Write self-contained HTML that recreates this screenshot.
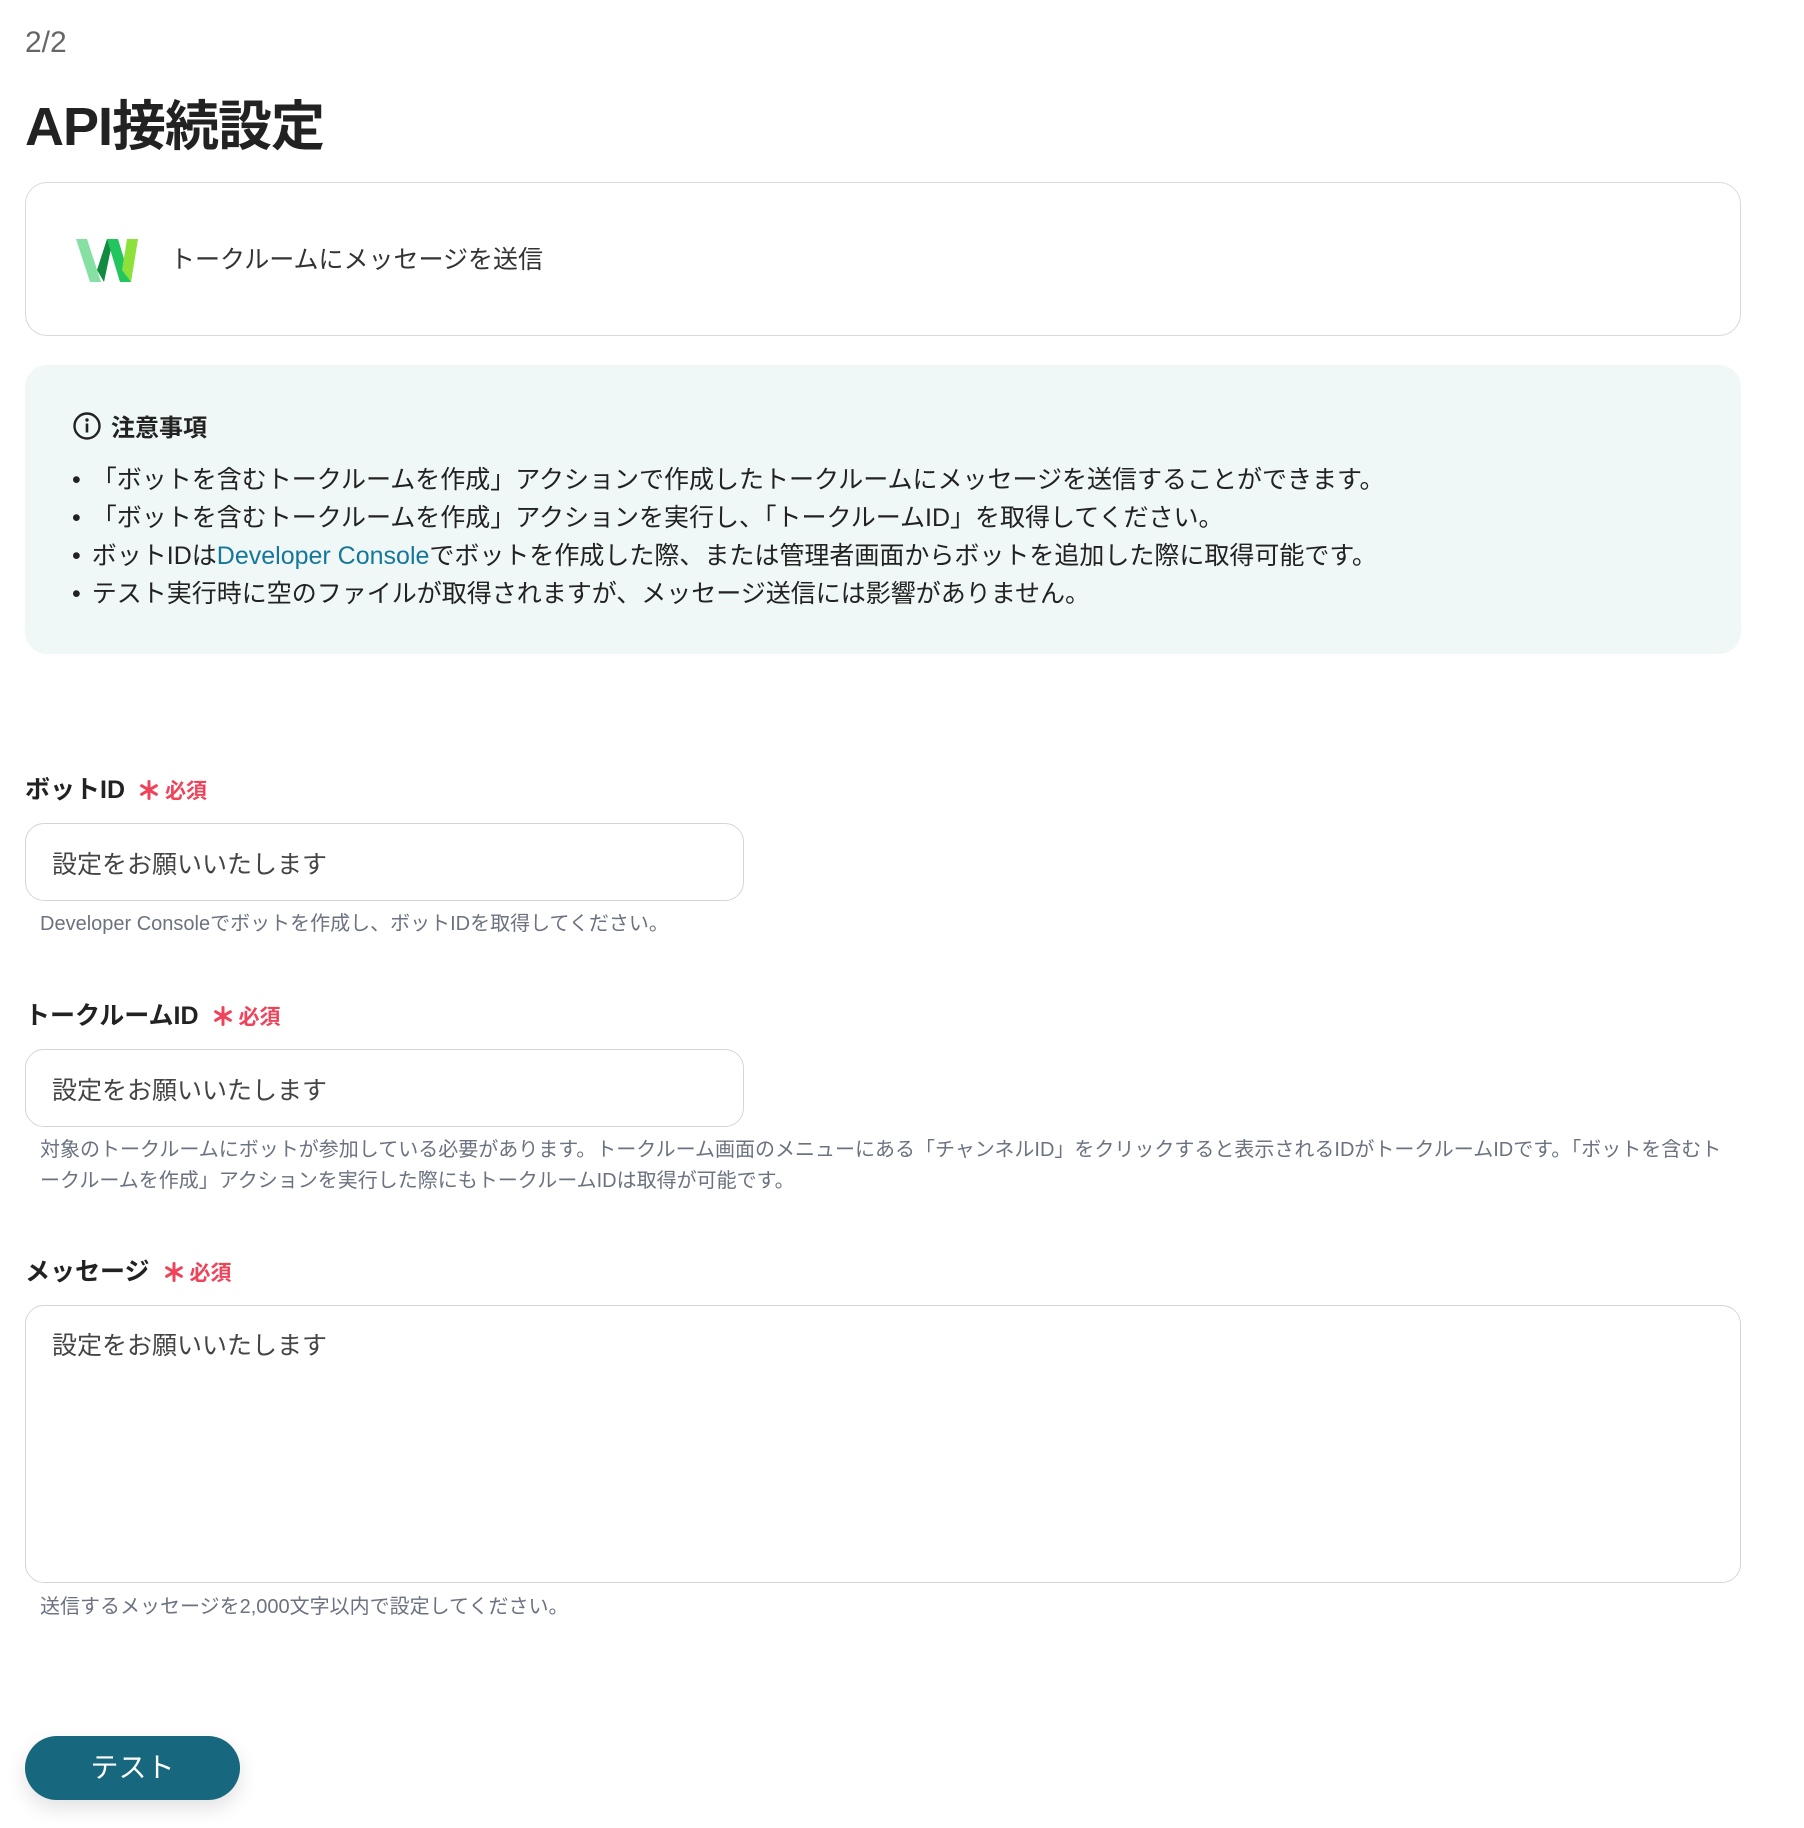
<!DOCTYPE html>
<html><head><meta charset="utf-8"><style>
*{box-sizing:border-box;margin:0;padding:0}
body{width:1804px;height:1828px;background:#fff;font-family:"Liberation Sans","Noto Sans CJK JP",sans-serif;color:#222;position:relative;overflow:hidden}
.abs{position:absolute}
.step{left:25px;top:26px;font-size:30px;color:#666}
.title{left:25px;top:82px;font-size:54px;font-weight:bold;color:#222;letter-spacing:-1px}
.card{left:25px;top:182px;width:1716px;height:154px;border:1px solid #d6d9dd;border-radius:22px}
.card .t{position:absolute;left:144px;top:57px;font-size:25px;color:#333}
.info{left:25px;top:365px;width:1716px;height:289px;background:#f0f8f7;border-radius:22px}
.info h3{position:absolute;left:86px;top:43px;font-size:24px;font-weight:bold}
.info ul{position:absolute;left:47px;top:96px;list-style:none;font-size:25px;line-height:38px;color:#222}
.info li::before{content:"•";margin-right:11px}
.info a{color:#17779a;text-decoration:none}
.lab{font-size:25px;font-weight:bold;color:#222}
.req{color:#f0435a;font-size:21px;font-weight:bold;margin-left:14px}
.req svg{vertical-align:-2px;margin-right:6px}
.inp{border:1px solid #d2d6db;border-radius:19px;font-size:25px;color:#444;padding:21px 26px}
.help{font-size:20px;color:#6b7280;line-height:31px}
.btn{left:25px;top:1736px;width:215px;height:64px;border-radius:32px;background:#17677e;color:#fff;font-size:28px;text-align:center;line-height:64px;box-shadow:0 8px 20px rgba(0,0,0,.12)}
</style></head><body>
<div class="abs step">2/2</div>
<div class="abs title">API接続設定</div>
<div class="abs card">
<svg class="abs" style="left:50px;top:54px" width="64" height="48" viewBox="76 237 64 48">
<polygon points="76,239 87,239 101,282 90,282" fill="#86e0a4"/>
<polygon points="97,270 107,239 113,239 104,282" fill="#128a40"/>
<polygon points="107,239 118,239 131,282 120,282" fill="#22c55e"/>
<polygon points="127,239 138,239 131,282 122,270" fill="#8ee03a"/>
</svg>
<div class="t">トークルームにメッセージを送信</div>
</div>
<div class="abs info">
<svg class="abs" style="left:47px;top:46px" width="30" height="30" viewBox="0 0 30 30"><circle cx="15" cy="15" r="12.5" fill="none" stroke="#222" stroke-width="2.4"/><circle cx="15" cy="9" r="1.7" fill="#222"/><rect x="13.7" y="12.5" width="2.6" height="9" fill="#222"/></svg>
<h3>注意事項</h3>
<ul>
<li>「ボットを含むトークルームを作成」アクションで作成したトークルームにメッセージを送信することができます。</li>
<li>「ボットを含むトークルームを作成」アクションを実行し、「トークルームID」を取得してください。</li>
<li>ボットIDは<a>Developer Console</a>でボットを作成した際、または管理者画面からボットを追加した際に取得可能です。</li>
<li>テスト実行時に空のファイルが取得されますが、メッセージ送信には影響がありません。</li>
</ul>
</div>
<div class="abs lab" style="left:25px;top:770px">ボットID<span class="req"><svg width="20" height="20" viewBox="0 0 20 20"><g stroke="#f0435a" stroke-width="3" stroke-linecap="round"><line x1="10" y1="1.5" x2="10" y2="18.5"/><line x1="2.6" y1="5.7" x2="17.4" y2="14.3"/><line x1="2.6" y1="14.3" x2="17.4" y2="5.7"/></g></svg>必須</span></div>
<div class="abs inp" style="left:25px;top:823px;width:719px;height:78px">設定をお願いいたします</div>
<div class="abs help" style="left:40px;top:909px">Developer Consoleでボットを作成し、ボットIDを取得してください。</div>
<div class="abs lab" style="left:25px;top:996px">トークルームID<span class="req"><svg width="20" height="20" viewBox="0 0 20 20"><g stroke="#f0435a" stroke-width="3" stroke-linecap="round"><line x1="10" y1="1.5" x2="10" y2="18.5"/><line x1="2.6" y1="5.7" x2="17.4" y2="14.3"/><line x1="2.6" y1="14.3" x2="17.4" y2="5.7"/></g></svg>必須</span></div>
<div class="abs inp" style="left:25px;top:1049px;width:719px;height:78px">設定をお願いいたします</div>
<div class="abs help" style="left:40px;top:1135px;width:1700px">対象のトークルームにボットが参加している必要があります。トークルーム画面のメニューにある「チャンネルID」をクリックすると表示されるIDがトークルームIDです。「ボットを含むトークルームを作成」アクションを実行した際にもトークルームIDは取得が可能です。</div>
<div class="abs lab" style="left:25px;top:1252px">メッセージ<span class="req"><svg width="20" height="20" viewBox="0 0 20 20"><g stroke="#f0435a" stroke-width="3" stroke-linecap="round"><line x1="10" y1="1.5" x2="10" y2="18.5"/><line x1="2.6" y1="5.7" x2="17.4" y2="14.3"/><line x1="2.6" y1="14.3" x2="17.4" y2="5.7"/></g></svg>必須</span></div>
<div class="abs inp" style="left:25px;top:1305px;width:1716px;height:278px;padding-top:20px">設定をお願いいたします</div>
<div class="abs help" style="left:40px;top:1592px">送信するメッセージを2,000文字以内で設定してください。</div>
<div class="abs btn">テスト</div>
</body></html>
